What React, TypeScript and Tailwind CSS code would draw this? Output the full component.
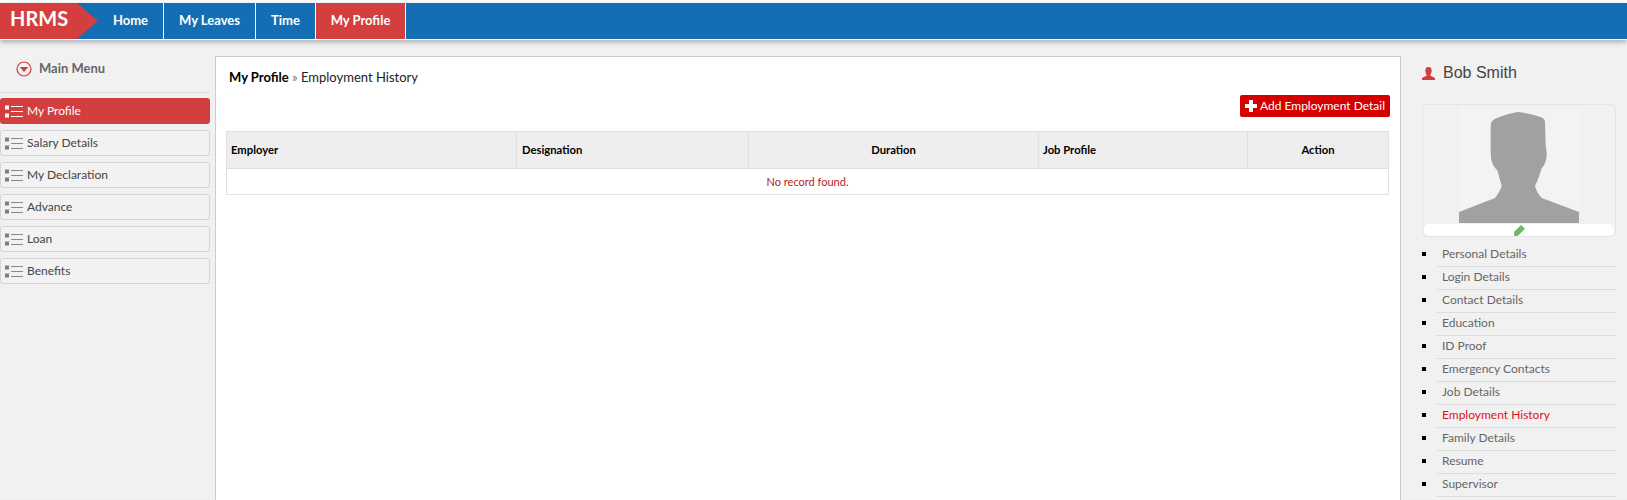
const navItems = [
  { label: "Home", w: "w-[66px]" },
  { label: "My Leaves", w: "w-[92px]" },
  { label: "Time", w: "w-[60px]" },
  { label: "My Profile", w: "w-[90px]", active: true },
];

const menuItems = ["My Profile", "Salary Details", "My Declaration", "Advance", "Loan", "Benefits"];

const profileLinks = [
  "Personal Details",
  "Login Details",
  "Contact Details",
  "Education",
  "ID Proof",
  "Emergency Contacts",
  "Job Details",
  "Employment History",
  "Family Details",
  "Resume",
  "Supervisor",
];

function ListIcon({ active }: { active: boolean }) {
  const square = active ? "#ffffff" : "#808080";
  const line = active ? "#ffffff" : "#8a8a8a";
  return (
    <svg width="18" height="13" viewBox="0 0 18 13" className="shrink-0">
      <rect x="0" y="0.5" width="4" height="4" fill={square} />
      <rect x="0" y="8.5" width="4" height="4" fill={square} />
      <rect x="6" y="1" width="12" height="1" fill={line} />
      <rect x="6" y="6" width="12" height="1" fill={line} />
      <rect x="6" y="11" width="12" height="1" fill={line} />
    </svg>
  );
}

function Silhouette() {
  return (
    <svg width="120" height="111" viewBox="0 0 120 111" className="block">
      <path
        d="M0 100 L36 86 C39 82 41.5 78 42.7 74 C41 68 40 63 38 58 C34 54 32 50 31.7 41 L31.7 14 C32 9 35 7 38 6 C45 3 52 1 59 0 C66 1 72 2 78 4 C83 5 86 7 86 10 L86.7 34 C88 40 88 44 87 48 C86 52 84 55 82.7 56 C81 62 79 68 76 74 C77 78 80 83 82.7 86 L120 100 V111 H0 Z"
        fill="#a0a2a1"
      />
    </svg>
  );
}

export default function App() {
  return (
    <div
      className="h-[500px] overflow-hidden bg-[#f2f2f2] bg-[repeating-linear-gradient(0deg,rgba(0,0,0,0.008)_0px,rgba(0,0,0,0.008)_1px,transparent_1px,transparent_4px),repeating-linear-gradient(90deg,rgba(0,0,0,0.008)_0px,rgba(0,0,0,0.008)_1px,transparent_1px,transparent_4px)] text-[12px] text-[#333]"
      style={{ fontFamily: '"Lato", "Liberation Sans", sans-serif' }}
    >
      <div className="pt-[3px] bg-white">
        <div className="flex h-[36px] bg-[#136eb3] shadow-[0_2px_5px_rgba(0,0,0,0.3)] border-b border-white box-content">
          <div className="flex">
            <div className="flex items-center w-[77px] pl-[10px] pb-[6px] bg-[#d33e3f] text-white text-[20px] font-bold">HRMS</div>
            <div className="w-0 h-0 border-y-[18px] border-y-transparent border-l-[21px] border-l-[#d33e3f]" />
          </div>
          {navItems.map((item) => (
            <div
              key={item.label}
              className={`flex items-center justify-center border-r border-white text-[13px] font-bold text-white ${item.w} ${item.active ? "bg-[#d33e3f]" : ""}`}
            >
              {item.label}
            </div>
          ))}
        </div>
      </div>

      <div className="flex">
        <aside className="w-[210px] shrink-0">
          <div className="flex items-center h-[53px] pl-[16px] pt-[5px] gap-[7px] border-b border-[#dcdcdc] text-[13px] font-bold text-[#666]">
            <svg width="16" height="16" viewBox="0 0 16 16">
              <circle cx="8" cy="8" r="7" fill="none" stroke="#d33e3f" strokeWidth="1.2" />
              <path d="M3.8 6 H12.2 L8 11 Z" fill="#d33e3f" />
            </svg>
            Main Menu
          </div>
          <div className="flex flex-col gap-[6px] mt-[5px]">
            {menuItems.map((item, i) => (
              <div
                key={item}
                className={`flex items-center gap-[4px] h-[26px] rounded-[3px] text-[12px] ${
                  i === 0 ? "pl-[5px] bg-[#d33e3f] text-white" : "pl-[4px] bg-[#f2f2f2] border border-[#d4d4d4] text-[#444]"
                }`}
              >
                <ListIcon active={i === 0} />
                {item}
              </div>
            ))}
          </div>
        </aside>

        <main className="w-[1186px] ml-[5px] mt-[16px] shrink-0 h-[500px] bg-white border border-[#cccccc] px-[10px]">
          <div className="pl-[3px] pt-[12px] text-[13px] leading-[17px] text-[#222]">
            <span className="font-bold text-black">My Profile</span> <span className="text-[#777]">»</span> Employment History
          </div>
          <div className="flex justify-end mt-[9px] mb-[14px]">
            <button className="flex items-center gap-[3px] h-[22px] w-[150px] pl-[5px] bg-[#d50000] rounded-[2px] text-[12px] text-white whitespace-nowrap">
              <svg width="12" height="12" viewBox="0 0 12 12">
                <path d="M4 0 H8 V4 H12 V8 H8 V12 H4 V8 H0 V4 H4 Z" fill="#ffffff" />
              </svg>
              Add Employment Detail
            </button>
          </div>
          <table className="w-[1163px] table-fixed border-collapse text-[11.25px]">
            <thead>
              <tr className="h-[37px] bg-[#eeeeee] text-black">
                <th className="w-[290px] border border-[#e0e0e0] pl-[4px] text-left font-bold">Employer</th>
                <th className="w-[232px] border border-[#e0e0e0] pl-[5px] text-left font-bold">Designation</th>
                <th className="w-[290px] border border-[#e0e0e0] text-center font-bold">Duration</th>
                <th className="w-[209px] border border-[#e0e0e0] pl-[4px] text-left font-bold">Job Profile</th>
                <th className="border border-[#e0e0e0] text-center font-bold">Action</th>
              </tr>
            </thead>
            <tbody>
              <tr className="h-[26px]">
                <td colSpan={5} className="border border-[#e0e0e0] pt-[1px] text-center text-[11px] text-[#b22222]">
                  No record found.
                </td>
              </tr>
            </tbody>
          </table>
        </main>

        <aside className="ml-[21px] w-[194px] shrink-0">
          <div className="flex items-center gap-[8px] h-[24px] mt-[21px] text-[16px] text-[#444]" style={{ fontFamily: '"Liberation Sans", sans-serif' }}>
            <svg width="13" height="13" viewBox="0 0 13 13">
              <path d="M6.5 0 C9 0 10 2 9.6 4.5 C9.3 6.5 8.4 7.6 8.2 8.4 L13 11 V13 H0 V11 L4.8 8.4 C4.6 7.6 3.7 6.5 3.4 4.5 C3 2 4 0 6.5 0 Z" fill="#d33e3f" />
            </svg>
            Bob Smith
          </div>
          <div className="mt-[19px] h-[133px] border border-[#e4e4e4] rounded-[5px] px-[1px] pt-[2px] flex flex-col items-center">
            <div className="w-[120px] h-[116px] bg-[#f3f3f3] flex items-end">
              <Silhouette />
            </div>
            <div className="mt-[1px] w-full h-[12px] bg-white rounded-[5px] flex items-center justify-center">
              <svg width="11" height="11" viewBox="0 0 11 11">
                <path d="M7 0 L11 3.8 L4 10.8 L0 11 L0.2 6.8 Z" fill="#6cb86c" />
              </svg>
            </div>
          </div>
          <ul className="mt-[7px]">
            {profileLinks.map((link) => (
              <li key={link} className="flex items-center h-[23px]">
                <span className="w-[4px] h-[4px] mr-[11px] mb-[3px] bg-black shrink-0" />
                <span
                  className={`flex-1 h-full flex items-center pl-[5px] pb-[3px] border-b border-[#dcdcdc] text-[12px] ${
                    link === "Employment History" ? "text-[#e0101a]" : "text-[#666]"
                  }`}
                >
                  {link}
                </span>
              </li>
            ))}
          </ul>
        </aside>
      </div>
    </div>
  );
}
